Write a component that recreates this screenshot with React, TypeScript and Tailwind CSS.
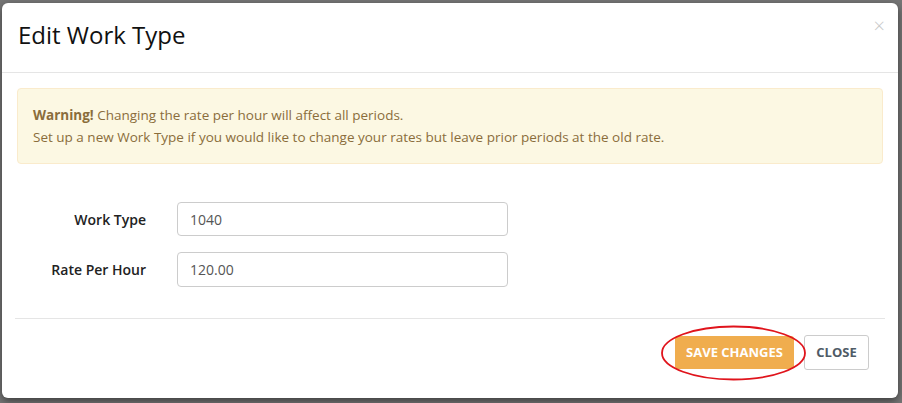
import React from 'react';

const font = { fontFamily: '"Open Sans", "Liberation Sans", sans-serif' };

export default function App() {
  return (
    <div className="w-[902px] h-[403px] bg-[#767676] pl-[2px] pt-[3px] overflow-hidden" style={font}>
      <div className="relative w-[896px] h-[395px] bg-white rounded-[6px] shadow-[0_3px_9px_rgba(0,0,0,0.5)] flex flex-col">
        {/* Header */}
        <div className="h-[70px] border-b border-[#e5e5e5] pl-[16px] pr-[13px] flex items-center justify-between">
          <h4 className="text-[24px] text-[#111] leading-none -mt-[6px]">Edit Work Type</h4>
          <button className="self-start mt-[13px] text-[20px] leading-none text-[#c8c8c8] font-light">×</button>
        </div>

        {/* Body */}
        <div className="px-[15px] pt-[15px]">
          <div className="bg-[#fcf8e3] border border-[#faebcc] rounded-[4px] px-[15px] pt-[15px] pb-[15px] text-[13.5px] leading-[22px] text-[#8a6d3b]">
            <p>
              <strong className="font-bold">Warning!</strong> Changing the rate per hour will affect all periods.
            </p>
            <p>Set up a new Work Type if you would like to change your rates but leave prior periods at the old rate.</p>
          </div>

          <div className="mt-[38px] flex flex-col gap-[16px]">
            <div className="flex items-center">
              <label className="w-[129px] text-right text-[14px] font-semibold text-[#222]">Work Type</label>
              <div className="ml-[31px] w-[331px] h-[34px] border border-[#ccc] rounded-[4px] px-[12px] flex items-center text-[14px] text-[#555]">
                1040
              </div>
            </div>
            <div className="flex items-center">
              <label className="w-[129px] text-right text-[14px] font-semibold text-[#222]">Rate Per Hour</label>
              <div className="ml-[31px] w-[331px] h-[35px] border border-[#ccc] rounded-[4px] px-[12px] flex items-center text-[14px] text-[#555]">
                120.00
              </div>
            </div>
          </div>
        </div>

        {/* Footer */}
        <div className="mx-[13px] mt-[31px] border-t border-[#e5e5e5] pt-[16px] pr-[16px] flex justify-end items-center gap-[10px]">
          <div className="relative">
            <button className="w-[119px] h-[33px] bg-[#f0ad4e] rounded-[3px] text-white text-[13px] font-bold uppercase">
              Save Changes
            </button>
            <svg className="absolute -left-[15px] -top-[11px] pointer-events-none" width="147" height="56" viewBox="0 0 147 56">
              <ellipse cx="73.5" cy="28" rx="71.5" ry="26.5" fill="none" stroke="#e0141c" strokeWidth="1.8" />
            </svg>
          </div>
          <button className="w-[65px] h-[35px] bg-white border border-[#ccc] rounded-[3px] text-[#4f5b66] text-[13px] font-bold uppercase">
            Close
          </button>
        </div>
      </div>
    </div>
  );
}
